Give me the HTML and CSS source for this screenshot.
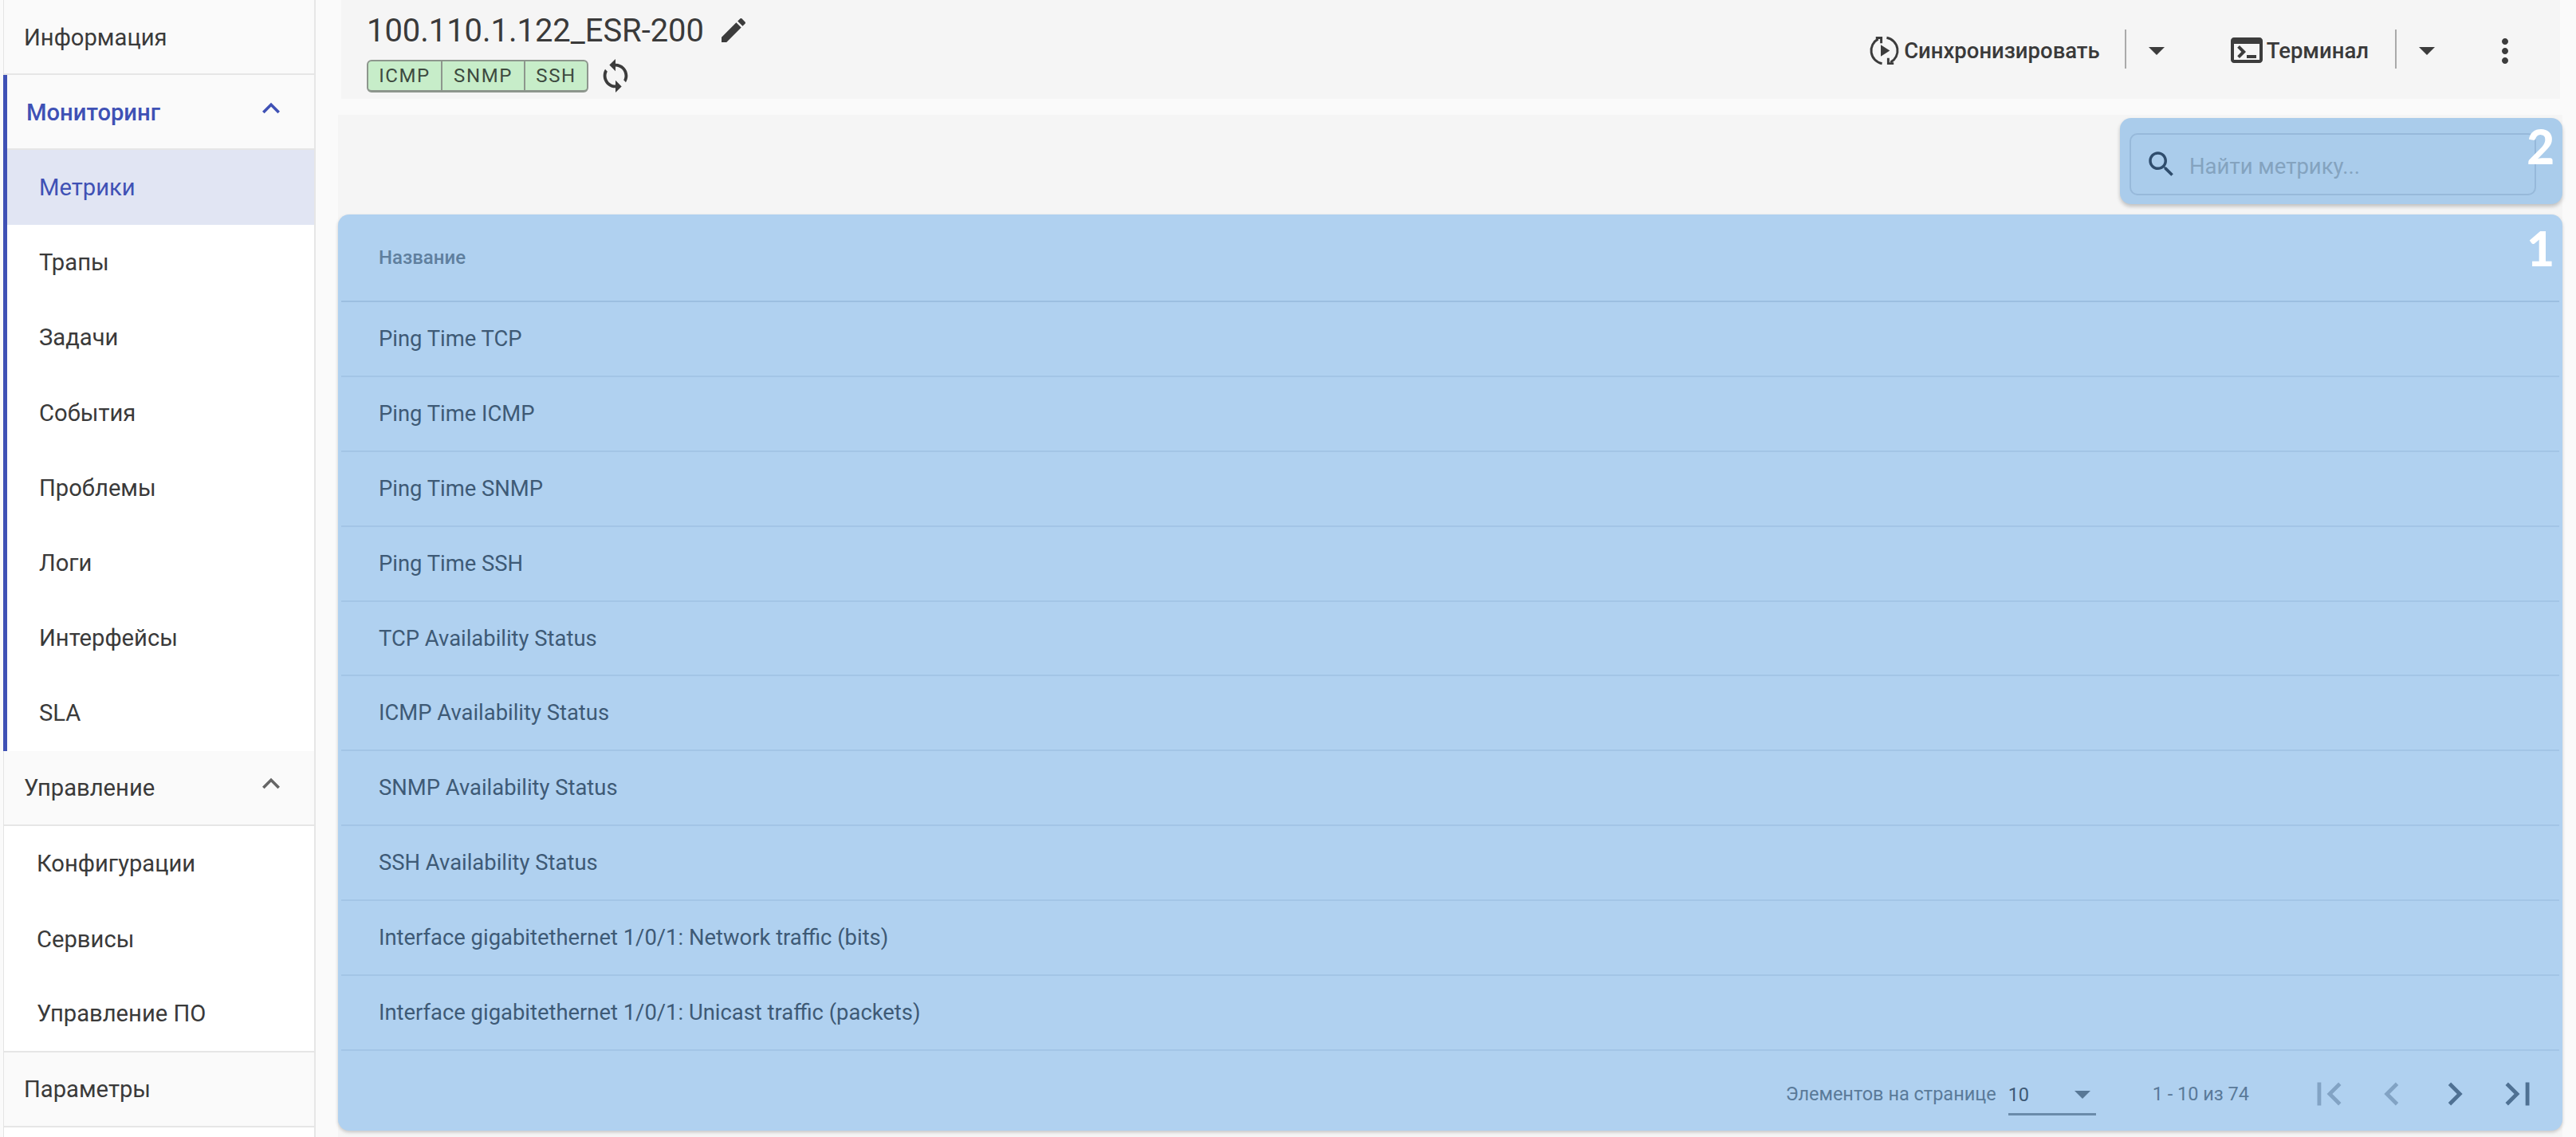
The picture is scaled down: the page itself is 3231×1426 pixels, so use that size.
FILE: index.html
```html
<!DOCTYPE html>
<html lang="ru">
<head>
<meta charset="utf-8">
<title>100.110.1.122_ESR-200</title>
<link rel="stylesheet" href="styles.css">
</head>
<body>
<aside class="sidebar">
  <div class="nav-head">Информация</div>
  <section class="group active">
    <div class="nav-head open"><span>Мониторинг</span><svg class="chev" viewBox="0 0 24 24"><path d="M12 8l-6 6 1.41 1.41L12 10.83l4.59 4.58L18 14z"/></svg></div>
    <div class="nav-sub selected">Метрики</div>
    <div class="nav-sub">Трапы</div>
    <div class="nav-sub">Задачи</div>
    <div class="nav-sub">События</div>
    <div class="nav-sub">Проблемы</div>
    <div class="nav-sub">Логи</div>
    <div class="nav-sub">Интерфейсы</div>
    <div class="nav-sub">SLA</div>
  </section>
  <section class="group">
    <div class="nav-head"><span>Управление</span><svg class="chev" viewBox="0 0 24 24"><path d="M12 8l-6 6 1.41 1.41L12 10.83l4.59 4.58L18 14z"/></svg></div>
    <div class="nav-sub plain">Конфигурации</div>
    <div class="nav-sub plain">Сервисы</div>
    <div class="nav-sub plain">Управление ПО</div>
  </section>
  <div class="nav-head">Параметры</div>
</aside>
<main class="main">
  <header class="topbar">
    <div class="device">
      <div class="title-row">
        <h1 class="title">100.110.1.122_ESR-200</h1>
        <svg class="pencil" viewBox="0 0 24 24"><path d="M3 17.25V21h3.75L17.81 9.94l-3.75-3.75L3 17.25zM20.71 7.04c.39-.39.39-1.02 0-1.41l-2.34-2.34c-.39-.39-1.02-.39-1.41 0l-1.83 1.83 3.75 3.75 1.83-1.83z"/></svg>
      </div>
      <div class="badge-row">
        <div class="badges"><span class="badge b1">ICMP</span><span class="badge b2">SNMP</span><span class="badge b3">SSH</span></div>
        <svg class="refresh" viewBox="0 0 24 24"><path d="M12 4V1L8 5l4 4V6c3.31 0 6 2.69 6 6 0 1.01-.25 1.97-.7 2.8l1.46 1.46C19.54 15.03 20 13.57 20 12c0-4.42-3.58-8-8-8zm0 14c-3.31 0-6-2.69-6-6 0-1.01.25-1.97.7-2.8L5.24 7.74C4.46 8.97 4 10.43 4 12c0 4.42 3.58 8 8 8v3l4-4-4-4v3z"/></svg>
      </div>
    </div>
    <div class="actions">
      <div class="action sync-action">
        <svg class="act-icon" viewBox="0 0 40 40"><g fill="none" stroke="#3c3c3c" stroke-width="3"><path d="M12 5A17 17 0 0 0 17 36.700"/><path d="M23 3.300A17 17 0 0 1 28 35"/><path d="M9 3.500H16V10.500"/><path d="M32 36.500H25V29.500"/></g><path d="M15.400 12.600L27 20 15.400 27.400z" fill="#3c3c3c"/></svg>
        <span class="act-label">Синхронизировать</span>
      </div>
      <i class="sep"></i>
      <svg class="drop" viewBox="0 0 24 24"><path d="M7 10l5 5 5-5z"/></svg>
      <div class="action term-action">
        <svg class="act-icon term" viewBox="2 4 20 16"><path d="M20 4H4c-1.100 0-2 .9-2 2v12c0 1.100.9 2 2 2h16c1.100 0 2-.9 2-2V6c0-1.100-.9-2-2-2zm0 14H4V8h16v10zm-2-1h-6v-2h6v2zM7.500 17l-1.410-1.410L8.670 13l-2.590-2.590L7.500 9l4 4-4 4z"/></svg>
        <span class="act-label">Терминал</span>
      </div>
      <i class="sep"></i>
      <svg class="drop" viewBox="0 0 24 24"><path d="M7 10l5 5 5-5z"/></svg>
      <svg class="more" viewBox="0 0 24 24"><path d="M12 8c1.100 0 2-.9 2-2s-.9-2-2-2-2 .9-2 2 .9 2 2 2zm0 2c-1.100 0-2 .9-2 2s.9 2 2 2 2-.9 2-2-.9-2-2-2zm0 6c-1.100 0-2 .9-2 2s.9 2 2 2 2-.9 2-2-.9-2-2-2z"/></svg>
    </div>
  </header>
  <div class="content">
    <div class="search-row">
      <div class="search-card">
        <div class="search-box">
          <svg class="search-icon" viewBox="0 0 24 24"><path d="M15.500 14h-.79l-.28-.27C15.410 12.590 16 11.110 16 9.500 16 5.910 13.090 3 9.500 3S3 5.910 3 9.500 5.910 16 9.500 16c1.610 0 3.090-.59 4.230-1.570l.27.28v.79l5 4.990L20.490 19l-4.990-5zm-6 0C7.010 14 5 11.990 5 9.500S7.010 5 9.500 5 14 7.010 14 9.500 11.990 14 9.500 14z"/></svg>
          <span class="placeholder">Найти метрику...</span>
        </div>
        <span class="num num2">2</span>
      </div>
    </div>
    <div class="table-card">
      <span class="num num1">1</span>
      <div class="thead">Название</div>
      <div class="row">Ping Time TCP</div>
      <div class="row">Ping Time ICMP</div>
      <div class="row">Ping Time SNMP</div>
      <div class="row">Ping Time SSH</div>
      <div class="row">TCP Availability Status</div>
      <div class="row">ICMP Availability Status</div>
      <div class="row">SNMP Availability Status</div>
      <div class="row">SSH Availability Status</div>
      <div class="row">Interface gigabitethernet 1/0/1: Network traffic (bits)</div>
      <div class="row">Interface gigabitethernet 1/0/1: Unicast traffic (packets)</div>
      <div class="pager">
        <span class="per-label">Элементов на странице</span>
        <div class="per-select"><span>10</span><svg class="pdrop" viewBox="0 0 24 24"><path d="M7 10l5 5 5-5z"/></svg></div>
        <span class="range">1 - 10 из 74</span>
        <svg class="pg off" viewBox="0 0 24 24"><path d="M18.410 16.590L13.820 12l4.590-4.590L17 6l-6 6 6 6zM6 6h2v12H6z"/></svg>
        <svg class="pg off" viewBox="0 0 24 24"><path d="M15.410 7.410L14 6l-6 6 6 6 1.410-1.410L10.830 12z"/></svg>
        <svg class="pg" viewBox="0 0 24 24"><path d="M10 6L8.590 7.410 13.170 12l-4.580 4.590L10 18l6-6z"/></svg>
        <svg class="pg" viewBox="0 0 24 24"><path d="M5.590 7.410L10.180 12l-4.590 4.590L7 18l6-6-6-6zM16 6h2v12h-2z"/></svg>
      </div>
    </div>
  </div>
</main>
</body>
</html>
```
FILE: styles.css
```css
* { box-sizing: border-box; }
html, body { margin: 0; height: 1426px; overflow: hidden; }
body { display: flex; background: #fafafa; font-family: Roboto, sans-serif; color: #3a3a3a; }

.sidebar { width: 392px; margin-left: 4px; flex: none; border-left: 1px solid #e4e4e4; border-right: 2px solid #e6e6e6; background: #fff; }
.nav-head { height: 94px; padding: 1px 32px 0 25px; display: flex; align-items: center; justify-content: space-between; font-size: 29.200px; background: #fafafa; border-bottom: 2px solid #e6e6e6; }
.nav-head.open { color: #3f51b5; font-weight: 500; }
.chev { width: 44px; height: 44px; margin: -10px 0 0; fill: #666; flex: none; }
.open .chev { fill: #3f51b5; }
.group.active { border-left: 5px solid #3f51b5; margin-left: -1px; }
.group.active .nav-head { padding-left: 24px; }
.nav-sub { height: 94.200px; padding-left: 40px; display: flex; align-items: center; font-size: 29.200px; }
.nav-sub.selected { background: #e1e5f3; color: #3f51b5; }
.nav-sub.plain { height: 94.800px; padding-left: 41px; }
.group:not(.active) .nav-sub:last-child { border-bottom: 2px solid #e6e6e6; }

.main { flex: 1; min-width: 0; display: flex; flex-direction: column; padding: 0 20px 0 32px; }
.topbar { height: 124px; flex: none; background: #f5f5f5; display: flex; justify-content: space-between; padding: 0 0 0 32px; margin-bottom: 20px; }
.device { padding-top: 12px; }
.title-row { display: flex; align-items: center; gap: 17px; height: 52px; }
.title { margin: 0; font-size: 39.900px; font-weight: 400; color: #3a3a3a; }
.pencil { width: 40px; height: 40px; fill: #3c3c3c; }
.badge-row { display: flex; align-items: center; gap: 11px; margin-top: 8px; }
.badges { display: flex; height: 41px; background: #c7edc9; border: 2px solid #8d968d; border-bottom-width: 3px; border-radius: 6px; }
.badge { display: flex; align-items: center; justify-content: center; font-size: 24px; letter-spacing: 1.600px; color: #3d4a3f; border-right: 2px solid #8d968d; }
.b1 { width: 93px; }
.b2 { width: 104px; }
.b3 { width: 77px; border-right: 0; }
.refresh { width: 46px; height: 46px; fill: #3c3c3c; }

.actions { display: flex; align-items: flex-start; padding: 37px 45px 0 0; }
.action { display: flex; align-items: center; gap: 5px; height: 52px; }
.act-icon { width: 39px; height: 39px; }
.act-icon.term { width: 40px; height: 32px; fill: #3c3c3c; }
.act-label { font-size: 27.500px; font-weight: 500; color: #3a3a3a; }
.sep { display: block; width: 2px; height: 49px; background: #aaa; margin-left: 31px; }
.term-action + .sep { margin-left: 33px; }
.drop { width: 48px; height: 48px; fill: #3c3c3c; margin: 2px 0 0 14px; }
.term-action { margin-left: 69px; }
.more { width: 48px; height: 48px; fill: #3c3c3c; margin: 3px 0 0 50px; }

.content { flex: 1; background: #f5f5f5; display: flex; flex-direction: column; margin: 0 -3px 0 -4px; }
.search-row { display: flex; justify-content: flex-end; padding: 4px 0 13px; }
.search-card { position: relative; width: 555px; height: 108px; background: #aacceb; border-radius: 14px; padding: 19px 33px 11px 12px; box-shadow: 0 3px 5px rgba(0,0,0,.22); }
.search-box { height: 78px; border: 2px solid #97b9da; border-radius: 10px; display: flex; align-items: center; padding-left: 17px; gap: 14px; }
.search-icon { width: 42px; height: 42px; fill: #2f4d6d; }
.placeholder { font-size: 27.500px; color: #84a3bf; padding-top: 4px; }
.num { position: absolute; right: 10px; color: #fff; font-family: Lato, sans-serif; font-weight: 900; font-size: 60px; line-height: 60px; }
.num2 { top: 5px; }
.num1 { top: 12px; }

.table-card { position: relative; height: 1149px; background: #b0d1f0; border-radius: 14px; padding: 0 4px; box-shadow: 0 2px 4px rgba(0,0,0,.2); }
.thead { height: 110px; display: flex; align-items: center; padding-left: 47px; font-size: 24px; font-weight: 500; color: #5f7f9e; border-bottom: 2px solid #9cbfe0; }
.row { height: 93.900px; display: flex; align-items: center; padding-left: 47px; font-size: 27.400px; color: #3e5a76; border-bottom: 2px solid #a3c5e6; }
.pager { height: 100px; display: flex; align-items: center; justify-content: flex-end; padding: 8px 23px 0 0; font-size: 23.500px; color: #5a7a99; }
.per-label { margin-right: 15px; }
.per-select { width: 110px; height: 46px; margin-top: 8px; padding-top: 6px; border-bottom: 3px solid #6a8baa; display: flex; justify-content: space-between; align-items: flex-start; color: #3e5a76; }
.pdrop { width: 48px; height: 48px; fill: #587896; margin: -11px -7px 0 0; }
.range { margin: 0 71px 0 71px; color: #5a7a99; }
.pg { width: 58px; height: 58px; fill: #4f7193; margin-left: 21px; flex: none; }
.pg.off { fill: #82a3c4; }
.range + .pg { margin-left: 0; }
```
